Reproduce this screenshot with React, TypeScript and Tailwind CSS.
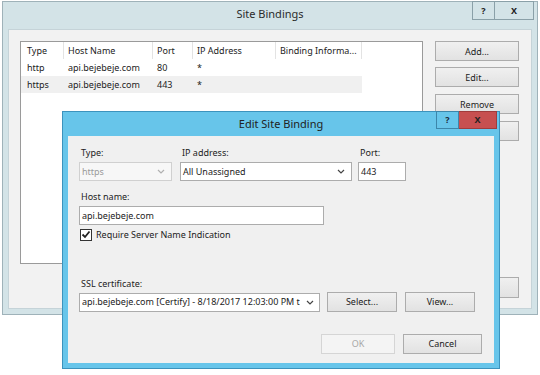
import React from 'react';

const font = { fontFamily: '"Noto Sans", "Open Sans", sans-serif' };

const Chevron: React.FC<{ color?: string }> = ({ color = '#444' }) => (
  <svg width="8" height="5" viewBox="0 0 8 5" className="shrink-0">
    <polyline points="1,1 4,4 7,1" fill="none" stroke={color} strokeWidth="1.2" />
  </svg>
);

const WinButton: React.FC<{ label?: string; className?: string; disabled?: boolean }> = ({ label, className = '', disabled }) => (
  <div
    className={`flex items-center justify-center border text-[9px] leading-none ${
      disabled
        ? 'border-[#d5d5d5] bg-[#f4f4f4] text-[#a8a8a8]'
        : 'border-[#acacac] bg-linear-to-b from-[#f0f0f0] to-[#e2e2e2] text-[#222]'
    } ${className}`}
  >
    {label}
  </div>
);

const columns = ['Type', 'Host Name', 'Port', 'IP Address', 'Binding Informa...'];
const rows = [
  ['http', 'api.bejebeje.com', '80', '*', ''],
  ['https', 'api.bejebeje.com', '443', '*', ''],
];

const gridCols = 'grid grid-cols-[43px_89px_40px_83px_86px]';

const SiteBindings: React.FC = () => (
  <div className="absolute left-[2px] top-[1px] flex h-[314px] w-[536px] flex-col border border-[#9fb2b9] bg-[#d3e3e7]">
    <div className="relative h-[27px] shrink-0">
      <div className="pt-[5px] text-center text-[11px] leading-[14px] text-[#2b2b2b]">Site Bindings</div>
      <div className="absolute right-[3px] top-[-1px] flex">
        <div className="flex h-[19px] w-[23px] items-center justify-center border border-[#8aa0a8] text-[9px] font-bold text-[#222]">?</div>
        <div className="flex h-[19px] w-[39px] items-center justify-center border border-l-0 border-[#8aa0a8] text-[9px] font-bold text-[#222]">X</div>
      </div>
    </div>
    <div className="mx-[5px] mb-[5px] flex flex-1 gap-[12px] border border-[#c5d3d8] bg-[#f2f2f2] pl-[11px] pt-[11px]">
      <div className="h-[223px] w-[403px] border border-[#9a9a9a] bg-white">
        <div className={`${gridCols} h-[17px] items-center text-[9px] text-[#222]`}>
          {columns.map((c, i) => (
            <div key={c} className={`flex h-full items-center border-r border-[#e3e3e3] ${i === 0 ? 'pl-[6px]' : 'pl-[4px]'}`}>
              {c}
            </div>
          ))}
        </div>
        {rows.map((r, ri) => (
          <div key={ri} className={`${gridCols} h-[17px] w-[341px] items-center text-[9px] text-[#222] ${ri === 1 ? 'bg-[#f0f0f0]' : ''}`}>
            {r.map((cell, ci) => (
              <div key={ci} className={ci === 0 ? 'pl-[6px]' : 'pl-[4px]'}>
                {cell}
              </div>
            ))}
          </div>
        ))}
      </div>
      <div className="flex w-[84px] flex-col">
        <WinButton label="Add..." className="h-[20px]" />
        <WinButton label="Edit..." className="mt-[6px] h-[20px]" />
        <WinButton label="Remove" className="mt-[7px] h-[20px]" />
        {/* labels of the two lower buttons sit under the dialog */}
        <WinButton className="mt-[7px] h-[20px]" />
        <WinButton className="mt-[136px] h-[21px]" />
      </div>
    </div>
  </div>
);

const Field: React.FC<{ label: string; children: React.ReactNode; className?: string }> = ({ label, children, className = '' }) => (
  <div className={`flex flex-col ${className}`}>
    <div className="mb-[2px] h-[14px] pl-[2px] text-[9px] leading-[14px] text-[#222]">{label}</div>
    {children}
  </div>
);

const EditSiteBinding: React.FC = () => (
  <div className="absolute left-[62px] top-[111px] flex h-[258px] w-[438px] flex-col border border-[#3c93bd] bg-[#67c5ea]">
    <div className="relative h-[24px] shrink-0">
      <div className="pt-[5px] text-center text-[11px] leading-[14px] text-[#222]">Edit Site Binding</div>
      <div className="absolute right-[2px] top-[-1px] flex">
        <div className="flex h-[18px] w-[23px] items-center justify-center border border-[#3c86aa] bg-[#67c5ea] text-[9px] font-bold text-[#1b2b3b]">?</div>
        <div className="flex h-[18px] w-[38px] items-center justify-center border border-l-0 border-[#a03c3c] bg-[#c75050] text-[9px] font-bold text-[#222]">X</div>
      </div>
    </div>
    <div className="mx-[5px] mb-[5px] flex flex-1 flex-col bg-[#f0f0f0] pl-[11px] pt-[10px]">
      <div className="flex">
        <Field label="Type:" className="w-[93px]">
          <div className="flex h-[19px] items-center justify-between border border-[#d0d0d0] bg-[#f7f7f7] pl-[2px] pr-[6px] text-[9px] text-[#9a9a9a]">
            <span>https</span>
            <Chevron color="#b0b0b0" />
          </div>
        </Field>
        <Field label="IP address:" className="ml-[8px] w-[172px]">
          <div className="flex h-[19px] items-center justify-between border border-[#acacac] bg-white pl-[2px] pr-[6px] text-[9px] text-[#222]">
            <span>All Unassigned</span>
            <Chevron />
          </div>
        </Field>
        <Field label="Port:" className="ml-[6px] w-[48px]">
          <div className="flex h-[19px] items-center border border-[#acacac] bg-white pl-[2px] text-[9px] text-[#222]">443</div>
        </Field>
      </div>
      <Field label="Host name:" className="mt-[9px] w-[245px]">
        <div className="flex h-[19px] items-center border border-[#acacac] bg-white pl-[2px] text-[9px] text-[#222]">api.bejebeje.com</div>
      </Field>
      <div className="mt-[3px] flex items-center gap-[4px] pl-[1px]">
        <div className="flex h-[12px] w-[12px] items-center justify-center border border-[#333] bg-white">
          <svg width="10" height="9" viewBox="0 0 10 9">
            <polyline points="1.5,4.5 4,7 8.5,1.5" fill="none" stroke="#222" strokeWidth="1.8" />
          </svg>
        </div>
        <span className="text-[9px] text-[#222]">Require Server Name Indication</span>
      </div>
      <div className="mt-[35px] flex items-end">
        <Field label="SSL certificate:" className="w-[241px]">
          <div className="flex h-[19px] items-center justify-between border border-[#acacac] bg-white pl-[2px] pr-[5px] text-[9px] text-[#222]">
            <span className="overflow-hidden whitespace-nowrap">api.bejebeje.com [Certify] - 8/18/2017 12:03:00 PM t</span>
            <Chevron />
          </div>
        </Field>
        <WinButton label="Select..." className="ml-[7px] h-[20px] w-[70px]" />
        <WinButton label="View..." className="ml-[8px] h-[20px] w-[70px]" />
      </div>
      <div className="mt-[22px] flex pl-[242px]">
        <WinButton label="OK" disabled className="h-[20px] w-[74px]" />
        <WinButton label="Cancel" className="ml-[8px] h-[20px] w-[79px]" />
      </div>
    </div>
  </div>
);

const App: React.FC = () => (
  <div className="relative h-[375px] w-[540px] overflow-hidden bg-white" style={font}>
    <SiteBindings />
    <EditSiteBinding />
  </div>
);

export default App;
